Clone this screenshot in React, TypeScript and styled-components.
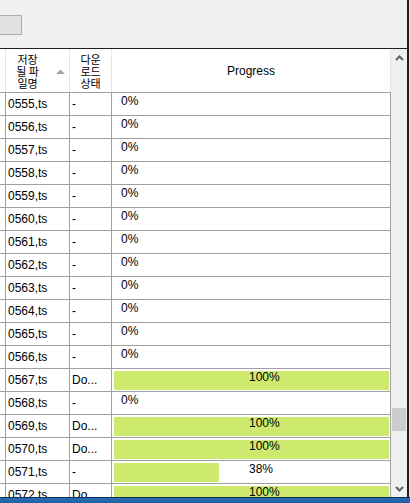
import React from "react";
import styled, { createGlobalStyle } from "styled-components";

const GlobalStyle = createGlobalStyle`
  html, body { margin: 0; padding: 0; background: #f0f0f0; }
  body { font-family: "Liberation Sans", Arial, sans-serif; font-size: 12px; color: #000; }
  * { box-sizing: border-box; }
`;

const COLS = "6px 64px 42px 279px";

const Page = styled.div`
  width: 410px;
  height: 503px;
  display: flex;
  flex-direction: column;
  overflow: hidden;
`;

const Window = styled.div`
  flex: 1;
  display: flex;
  min-height: 0;
`;

const Main = styled.div`
  width: 407px;
  display: flex;
  flex-direction: column;
`;

const RightFrame = styled.div`
  width: 3px;
  background: #1e1e1e;
  border-right: 1px solid #dfe5ec;
`;

const Toolbar = styled.div`
  height: 48px;
  background: #f0f0f0;
  padding-top: 15px;
  display: flex;
  align-items: flex-start;
`;

const ToolButton = styled.button`
  margin-left: -10px;
  width: 32px;
  height: 20px;
  background: #e1e1e1;
  border: 1px solid #adadad;
  padding: 0;
`;

const ListFrame = styled.div`
  flex: 1;
  display: flex;
  border-top: 1px solid #1e1e1e;
  background: #fff;
  min-height: 0;
  overflow: hidden;
`;

const Table = styled.div`
  width: 391px;
  display: flex;
  flex-direction: column;
  overflow: hidden;
`;

const HeaderRow = styled.div`
  display: grid;
  grid-template-columns: ${COLS};
  height: 44px;
  flex: none;
  border-bottom: 1px solid #a0a0a0;
  background: #fff;
`;

const HeaderCell = styled.div<{ $sorted?: boolean }>`
  position: relative;
  display: flex;
  align-items: center;
  justify-content: center;
  border-right: 1px solid #e5e5e5;
  padding-right: ${(p) => (p.$sorted ? "20px" : "0")};
  text-align: center;
`;

const KoreanTitle = styled.div`
  font-family: "Noto Sans CJK KR", "Noto Sans", sans-serif;
  font-size: 11px;
  line-height: 12px;
  padding-top: 1px;
`;

const LatinTitle = styled.div`
  font-size: 12px;
  line-height: 14px;
`;

const SortArrow = styled.svg`
  position: absolute;
  right: 4px;
  top: 20px;
`;

const Row = styled.div`
  display: grid;
  grid-template-columns: ${COLS};
  height: 23px;
  flex: none;
  border-bottom: 1px solid #a0a0a0;
`;

const Cell = styled.div`
  border-right: 1px solid #a0a0a0;
  padding-left: 2px;
  line-height: 22px;
  white-space: nowrap;
  overflow: hidden;
`;

const ProgressCell = styled.div`
  position: relative;
  border-right: 1px solid #a0a0a0;
  padding: 2px 1px 1px 2px;
`;

const Bar = styled.div`
  height: 100%;
  background: #cdea6e;
`;

const Percent = styled.span<{ $empty: boolean }>`
  position: absolute;
  top: 1px;
  left: ${(p) => (p.$empty ? "9px" : "137px")};
  line-height: 14px;
  font-size: 12px;
`;

const ScrollBar = styled.div`
  width: 16px;
  background: #f0f0f0;
  display: flex;
  flex-direction: column;
`;

const ScrollButton = styled.div`
  height: 17px;
  flex: none;
  display: flex;
  align-items: center;
  justify-content: center;
`;

const Track = styled.div`
  flex: 1;
  position: relative;
`;

const Thumb = styled.div`
  position: absolute;
  left: 1px;
  right: 1px;
  height: 23px;
  background: #cdcdcd;
`;

const Taskbar = styled.div`
  height: 6px;
  flex: none;
  border-top: 1px solid #0e2c4e;
  background: linear-gradient(#2a6fb6, #1d5fa5);
`;

type Item = { name: string; status: string; progress: number };

const items: Item[] = [
  ...Array.from({ length: 12 }, (_, i) => ({
    name: `0${555 + i},ts`,
    status: "-",
    progress: 0,
  })),
  { name: "0567,ts", status: "Do...", progress: 100 },
  { name: "0568,ts", status: "-", progress: 0 },
  { name: "0569,ts", status: "Do...", progress: 100 },
  { name: "0570,ts", status: "Do...", progress: 100 },
  { name: "0571,ts", status: "-", progress: 38 },
  { name: "0572,ts", status: "Do...", progress: 100 },
];

const Chevron = ({ up }: { up: boolean }) => (
  <svg width="9" height="6" viewBox="0 0 9 6">
    <polyline
      points={up ? "1,5 4.5,1.5 8,5" : "1,1 4.5,4.5 8,1"}
      fill="none"
      stroke="#606060"
      strokeWidth="2"
    />
  </svg>
);

export default function App() {
  return (
    <Page>
      <GlobalStyle />
      <Window>
        <Main>
          <Toolbar>
            <ToolButton aria-label="button" />
          </Toolbar>
          <ListFrame>
            <Table>
              <HeaderRow>
                <HeaderCell />
                <HeaderCell $sorted>
                  <KoreanTitle>
                    저장
                    <br />될 파
                    <br />일명
                  </KoreanTitle>
                  <SortArrow width="9" height="5" viewBox="0 0 9 5">
                    <polygon points="0,5 4.5,0.5 9,5" fill="#a4a4a4" />
                  </SortArrow>
                </HeaderCell>
                <HeaderCell>
                  <KoreanTitle>
                    다운
                    <br />로드
                    <br />상태
                  </KoreanTitle>
                </HeaderCell>
                <HeaderCell>
                  <LatinTitle>Progress</LatinTitle>
                </HeaderCell>
              </HeaderRow>
              {items.map((it) => (
                <Row key={it.name}>
                  <Cell />
                  <Cell>{it.name}</Cell>
                  <Cell>{it.status}</Cell>
                  <ProgressCell>
                    {it.progress > 0 && (
                      <Bar style={{ width: `${it.progress}%` }} />
                    )}
                    <Percent $empty={it.progress === 0}>{it.progress}%</Percent>
                  </ProgressCell>
                </Row>
              ))}
            </Table>
            <ScrollBar>
              <ScrollButton>
                <Chevron up />
              </ScrollButton>
              <Track>
                <Thumb style={{ top: 342 }} />
              </Track>
              <ScrollButton>
                <Chevron up={false} />
              </ScrollButton>
            </ScrollBar>
          </ListFrame>
        </Main>
        <RightFrame />
      </Window>
      <Taskbar />
    </Page>
  );
}
